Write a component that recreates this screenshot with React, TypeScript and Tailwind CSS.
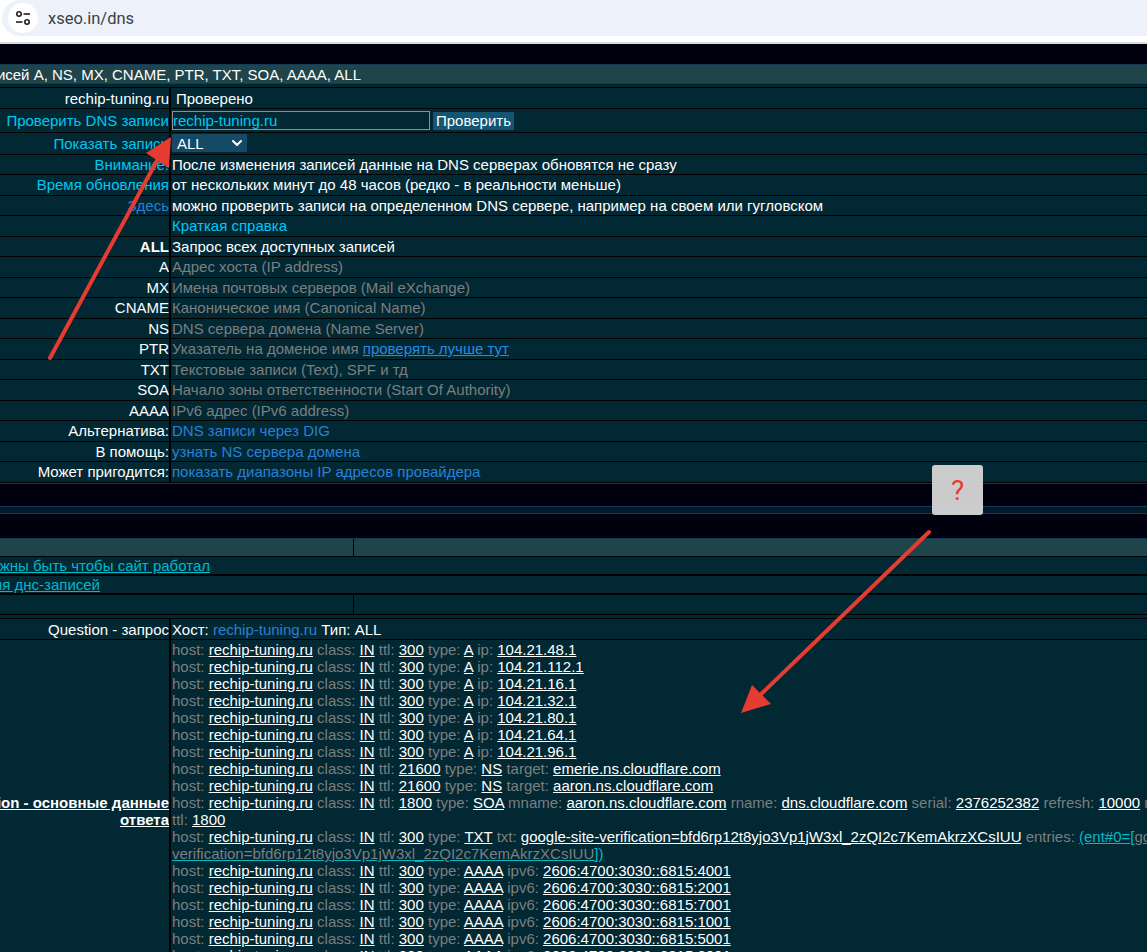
import { ReactNode } from "react";
import { ChevronDown } from "lucide-react";

const Gray = ({ children }: { children: ReactNode }) => (
  <span className="text-[#7b7f80]">{children}</span>
);

const Val = ({ children }: { children: ReactNode }) => (
  <a className="text-white underline">{children}</a>
);

const Row = ({
  label,
  children,
  h = "h-[20.5px]",
}: {
  label?: ReactNode;
  children?: ReactNode;
  h?: string;
}) => (
  <div className={`flex ${h} border-b border-black`}>
    <div className="flex w-[171px] shrink-0 items-center justify-end overflow-hidden whitespace-nowrap border-r-2 border-black">
      {label}
    </div>
    <div className="flex min-w-0 flex-1 items-center whitespace-pre pl-px">{children}</div>
  </div>
);

const HostLine = ({
  ttl,
  type,
  children,
}: {
  ttl: string;
  type: string;
  children: ReactNode;
}) => (
  <div className="h-[17px] whitespace-pre">
    <Gray>host: </Gray>
    <Val>rechip-tuning.ru</Val>
    <Gray> class: </Gray>
    <Val>IN</Val>
    <Gray> ttl: </Gray>
    <Val>{ttl}</Val>
    <Gray> type: </Gray>
    <Val>{type}</Val>
    <Gray> </Gray>
    {children}
  </div>
);

const aRecords = ["48", "112", "16", "32", "80", "64", "96"];
const aaaaRecords = ["4001", "2001", "7001", "1001", "5001", "3001", "6001"];

const helpRows = [
  { label: "ALL", text: "Запрос всех доступных записей", bold: true },
  { label: "A", text: "Адрес хоста (IP address)" },
  { label: "MX", text: "Имена почтовых серверов (Mail eXchange)" },
  { label: "CNAME", text: "Каноническое имя (Canonical Name)" },
  { label: "NS", text: "DNS сервера домена (Name Server)" },
];

const App = () => {
  return (
    <div className="relative h-screen w-full overflow-hidden bg-[#012833] font-['Liberation_Sans',Arial,sans-serif] text-[15px] leading-[17px] text-white">
      {/* browser bar */}
      <div className="h-[44px] border-b-2 border-[#dcdcdc] bg-white">
        <div className="ml-[2px] flex h-[36px] items-center rounded-l-[18px] bg-[#edf2fa] pl-[6px]">
          <div className="flex h-[30px] w-[30px] items-center justify-center rounded-full bg-white">
            <svg width="18" height="18" viewBox="0 0 18 18" fill="none" stroke="#1f1f1f" strokeWidth="1.6">
              <circle cx="5" cy="5" r="2.2" />
              <path d="M9.5 5H16" />
              <circle cx="13" cy="13" r="2.2" />
              <path d="M2 13H8.5" />
            </svg>
          </div>
          <span className="ml-[10px] font-['Roboto',sans-serif] text-[16.5px] text-[#3c4043]">xseo.in/dns</span>
        </div>
      </div>

      <div className="h-[20px] bg-[#00000f]" />

      {/* title */}
      <div className="h-[20px] border-y border-[#123c55] bg-[#1f4449]">
        <div className="flex h-full w-[361px] items-center justify-end overflow-hidden whitespace-nowrap">
          Проверка записей A, NS, MX, CNAME, PTR, TXT, SOA, AAAA, ALL
        </div>
      </div>
      <div className="h-[4px] border-b border-black" />

      <Row label="rechip-tuning.ru" h="h-[21px]">
        <span className="pl-[4px]">Проверено</span>
      </Row>
      <Row label={<span className="text-[#00c8f2]">Проверить DNS записи</span>} h="h-[24px]">
        <input
          readOnly
          value="rechip-tuning.ru"
          className="h-[19px] w-[258px] border border-[#8a8f90] bg-[#012833] text-[#00c8f2] outline-none"
        />
        <button className="ml-[3px] h-[18px] w-[81px] bg-[#135673] text-center text-white">Проверить</button>
      </Row>
      <Row label={<span className="text-[#00c8f2]">Показать записи</span>} h="h-[21.5px]">
        <div className="relative h-[18px] w-[75px]">
          <select className="h-full w-full appearance-none bg-[#154a66] pl-[5px] text-white outline-none">
            <option>ALL</option>
          </select>
          <ChevronDown className="absolute right-[2px] top-[1px] h-4 w-4 text-white" strokeWidth={3} />
        </div>
      </Row>
      <Row label={<span className="text-[#00c8f2]">Внимание!</span>}>После изменения записей данные на DNS серверах обновятся не сразу</Row>
      <Row label={<span className="text-[#00c8f2]">Время обновления</span>}>от нескольких минут до 48 часов (редко - в реальности меньше)</Row>
      <Row label={<span className="text-[#2a80d6]">Здесь</span>}>можно проверить записи на определенном DNS сервере, например на своем или гугловском</Row>
      <Row>
        <span className="text-[#00c8f2]">Краткая справка</span>
      </Row>
      {helpRows.map((r) => (
        <Row key={r.label} label={r.bold ? <b>{r.label}</b> : r.label}>
          {r.bold ? r.text : <Gray>{r.text}</Gray>}
        </Row>
      ))}
      <Row label="PTR">
        <Gray>Указатель на доменое имя </Gray>
        <a className="text-[#2a8ae0] underline">проверять лучше тут</a>
      </Row>
      <Row label="TXT">
        <Gray>Текстовые записи (Text), SPF и тд</Gray>
      </Row>
      <Row label="SOA">
        <Gray>Начало зоны ответственности (Start Of Authority)</Gray>
      </Row>
      <Row label="AAAA">
        <Gray>IPv6 адрес (IPv6 address)</Gray>
      </Row>
      <Row label="Альтернатива:">
        <span className="text-[#2a80d6]">DNS записи через DIG</span>
      </Row>
      <Row label="В помощь:">
        <span className="text-[#2a80d6]">узнать NS сервера домена</span>
      </Row>
      <Row label="Может пригодится:">
        <span className="text-[#2a80d6]">показать диапазоны IP адресов провайдера</span>
      </Row>

      {/* black bands */}
      <div className="h-[24.5px] border-y border-[#123c55] bg-[#00000f]" />
      <div className="h-[6px] bg-[#011a2c]" />
      <div className="h-[26px] border-y border-[#123c55] bg-[#00000f]" />

      {/* links block */}
      <div className="flex h-[18px] border-b border-black bg-[#1f4449]">
        <div className="w-[354px] border-r border-black" />
      </div>
      <div className="flex h-[19px] w-full border-b-2 border-black">
        <div className="flex w-[210px] items-center justify-end overflow-hidden whitespace-nowrap">
          <a className="text-[#00b9c9] underline">Какие записи должны быть чтобы сайт работал</a>
        </div>
      </div>
      <div className="flex h-[19px] w-full border-b-2 border-black">
        <div className="flex w-[100px] items-center justify-end overflow-hidden whitespace-nowrap">
          <a className="text-[#00b9c9] underline">Инструкция для днс-записей</a>
        </div>
      </div>
      <div className="flex h-[20px] border-b border-black">
        <div className="w-[354px] border-r border-black" />
      </div>
      <div className="h-[4px] border-b border-black" />

      <Row label="Question - запрос" h="h-[21px]">
        Хост: <span className="text-[#2a80d6]">rechip-tuning.ru</span> Тип: ALL
      </Row>

      {/* answer */}
      <div className="flex">
        <div className="flex w-[171px] shrink-0 flex-col items-end justify-center overflow-hidden whitespace-nowrap border-r-2 border-black font-bold underline">
          <div>Information - основные данные</div>
          <div>ответа</div>
        </div>
        <div className="min-w-0 flex-1 overflow-hidden pl-px pt-px">
          {aRecords.map((ip) => (
            <HostLine key={ip} ttl="300" type="A">
              <Gray>ip: </Gray>
              <Val>{`104.21.${ip}.1`}</Val>
            </HostLine>
          ))}
          <HostLine ttl="21600" type="NS">
            <Gray>target: </Gray>
            <Val>emerie.ns.cloudflare.com</Val>
          </HostLine>
          <HostLine ttl="21600" type="NS">
            <Gray>target: </Gray>
            <Val>aaron.ns.cloudflare.com</Val>
          </HostLine>
          <HostLine ttl="1800" type="SOA">
            <Gray>mname: </Gray>
            <Val>aaron.ns.cloudflare.com</Val>
            <Gray> rname: </Gray>
            <Val>dns.cloudflare.com</Val>
            <Gray> serial: </Gray>
            <Val>2376252382</Val>
            <Gray> refresh: </Gray>
            <Val>10000</Val>
            <Gray> retry: </Gray>
            <Val>2400</Val>
          </HostLine>
          <div className="h-[17px] whitespace-pre">
            <Gray>ttl: </Gray>
            <Val>1800</Val>
          </div>
          <HostLine ttl="300" type="TXT">
            <Gray>txt: </Gray>
            <Val>google-site-verification=bfd6rp12t8yjo3Vp1jW3xl_2zQI2c7KemAkrzXCsIUU</Val>
            <Gray> entries: </Gray>
            <a className="text-[#00b9c9] underline">
              (ent#0=[<span className="text-[#7b7f80]">google-site-</span>
            </a>
          </HostLine>
          <div className="h-[17px] whitespace-pre">
            <a className="text-[#00b9c9] underline">
              <span className="text-[#7b7f80]">verification=bfd6rp12t8yjo3Vp1jW3xl_2zQI2c7KemAkrzXCsIUU</span>])
            </a>
          </div>
          {aaaaRecords.map((tail) => (
            <HostLine key={tail} ttl="300" type="AAAA">
              <Gray>ipv6: </Gray>
              <Val>{`2606:4700:3030::6815:${tail}`}</Val>
            </HostLine>
          ))}
        </div>
      </div>

      {/* screenshot annotations */}
      <svg className="pointer-events-none absolute left-0 top-0" width="1147" height="952" fill="none">
        <path d="M50 358L160 155" stroke="#e53b30" strokeWidth="4" strokeLinecap="round" />
        <path d="M171 137L146 153L169 168Z" fill="#e53b30" />
        <path d="M929 532L753 702" stroke="#e53b30" strokeWidth="4" strokeLinecap="round" />
        <path d="M741 713L752 685L771 704Z" fill="#e53b30" />
      </svg>
      <div className="absolute left-[932px] top-[465px] flex h-[50px] w-[51px] items-center justify-center rounded-[3px] bg-[#d6d6d6]/95 font-['Roboto',sans-serif] text-[28px] text-[#e53b30]">
        ?
      </div>
    </div>
  );
};

export default App;
